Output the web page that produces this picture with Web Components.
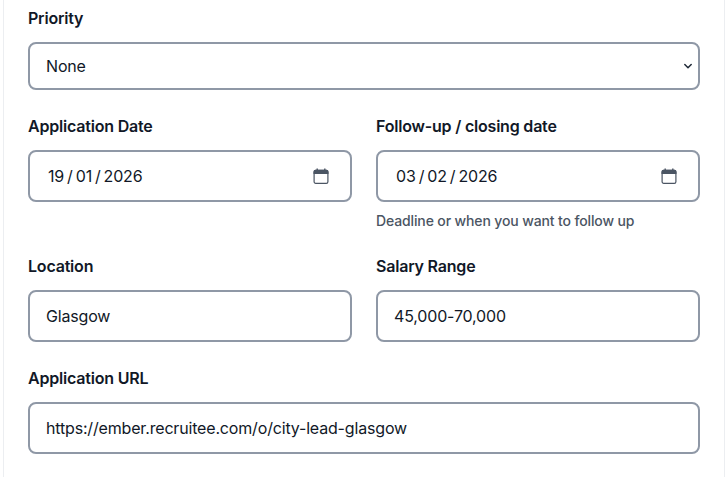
<!DOCTYPE html>
<html>
<head>
<meta charset="utf-8">
<title>Application form</title>
<style>
  html, body { margin: 0; height: 100%; background: #fff; overflow: hidden; }
  body { font-family: Inter, "Liberation Sans", sans-serif; color: #111827; }
</style>
</head>
<body>
<job-form>
  <form-field label="Priority">
    <form-select>None</form-select>
  </form-field>
  <form-row>
    <form-field label="Application Date">
      <form-date day="19" month="01" year="2026"></form-date>
    </form-field>
    <form-field label="Follow-up / closing date" hint="Deadline or when you want to follow up">
      <form-date day="03" month="02" year="2026"></form-date>
    </form-field>
  </form-row>
  <form-row>
    <form-field label="Location">
      <form-text>Glasgow</form-text>
    </form-field>
    <form-field label="Salary Range">
      <form-text>45,000-70,000</form-text>
    </form-field>
  </form-row>
  <form-field label="Application URL">
    <form-text>https://ember.recruitee.com/o/city-lead-glasgow</form-text>
  </form-field>
</job-form>

<script>
// shared box look for the controls
const controlCss = `
  :host { display: flex; align-items: center; box-sizing: border-box; border: 2px solid #8f98a6;
    border-radius: 8px; background: #fff; font-size: 16px; letter-spacing: -0.17px; color: #111827; }
`;

class JobForm extends HTMLElement {
  constructor() {
    super();
    this.attachShadow({mode: 'open'}).innerHTML = `
      <style>
        :host { display: block; box-sizing: border-box; height: 477px; margin: 0 0 0 3px;
          padding: 8px 24px 0; border-left: 1px solid #eceef1; border-right: 1px solid #eceef1;
          background: #fff; }
        .stack { display: flex; flex-direction: column; gap: 26px; }
      </style>
      <div class="stack"><slot></slot></div>`;
  }
}

class FormRow extends HTMLElement {
  constructor() {
    super();
    this.attachShadow({mode: 'open'}).innerHTML = `
      <style>
        :host { display: grid; grid-template-columns: 1fr 1fr; column-gap: 24px; }
      </style>
      <slot></slot>`;
  }
}

class FormField extends HTMLElement {
  constructor() {
    super();
    this.attachShadow({mode: 'open'}).innerHTML = `
      <style>
        :host { display: block; min-width: 0; }
        label { display: block; height: 20px; margin-bottom: 14px; font-size: 16px; line-height: 20px;
          font-weight: 600; letter-spacing: -0.2px; color: #111827; }
        p { margin: 10px 0 0; font-size: 14px; line-height: 18px; font-weight: 500; letter-spacing: -0.13px; color: #4b5563; }
      </style>
      <label></label>
      <slot></slot>
      <p hidden></p>`;
  }

  connectedCallback() {
    this.shadowRoot.querySelector('label').textContent = this.getAttribute('label');
    const hint = this.getAttribute('hint');
    if (hint) {
      const p = this.shadowRoot.querySelector('p');
      p.textContent = hint;
      p.hidden = false;
    }
  }
}

class FormSelect extends HTMLElement {
  constructor() {
    super();
    this.attachShadow({mode: 'open'}).innerHTML = `
      <style>
        ${controlCss}
        :host { height: 48px; padding: 0 5px 0 16px; justify-content: space-between; }
        svg { display: block; }
      </style>
      <slot></slot>
      <svg width="10" height="10" viewBox="0 0 10 10" fill="none" stroke="#1f2937" stroke-width="1.5"
        stroke-linecap="round" stroke-linejoin="round"><path d="M1.800 3.500 5 6.700l3.200-3.200"/></svg>`;
  }
}

class FormText extends HTMLElement {
  constructor() {
    super();
    this.attachShadow({mode: 'open'}).innerHTML = `
      <style>
        ${controlCss}
        :host { height: 52px; padding: 0 16px; }
      </style>
      <slot></slot>`;
  }
}

class FormDate extends HTMLElement {
  constructor() {
    super();
    this.attachShadow({mode: 'open'}).innerHTML = `
      <style>
        ${controlCss}
        :host { height: 52px; padding: 0 20px 0 18px; justify-content: space-between; }
        .value { display: flex; gap: 3px; }
        svg { display: block; }
      </style>
      <div class="value"><span class="d"></span><span>/</span><span class="m"></span><span>/</span><span class="y"></span></div>
      <svg width="18" height="18" viewBox="0 0 18 18">
        <path d="M4.500 1.500h1.400v2H4.500zM12.100 1.500h1.400v2h-1.400z" fill="#4b5563"/>
        <path d="M3.400 2.800h11.200A1.900 1.900 0 0 1 16.500 4.700V7H1.500V4.700A1.900 1.900 0 0 1 3.400 2.800z" fill="#4b5563"/>
        <rect x="2.100" y="3.400" width="13.800" height="13" rx="1.600" fill="none" stroke="#4b5563" stroke-width="1.200"/>
      </svg>`;
  }

  connectedCallback() {
    const root = this.shadowRoot;
    root.querySelector('.d').textContent = this.getAttribute('day');
    root.querySelector('.m').textContent = this.getAttribute('month');
    root.querySelector('.y').textContent = this.getAttribute('year');
  }
}

customElements.define('job-form', JobForm);
customElements.define('form-row', FormRow);
customElements.define('form-field', FormField);
customElements.define('form-select', FormSelect);
customElements.define('form-text', FormText);
customElements.define('form-date', FormDate);
</script>
</body>
</html>
